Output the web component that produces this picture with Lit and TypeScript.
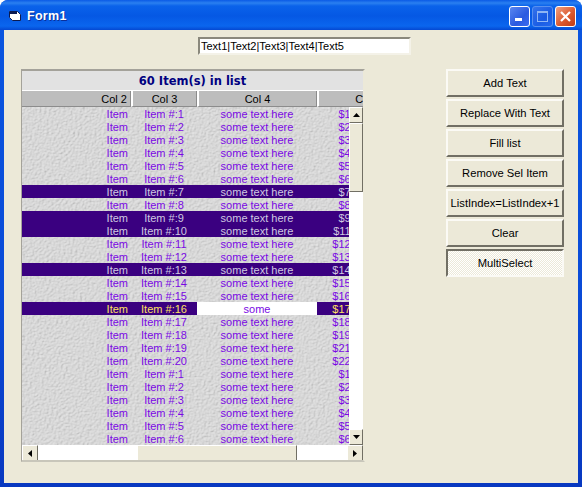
import { LitElement, css, html } from "lit";
import { customElement } from "lit/decorators.js";
import { classMap } from "lit/directives/class-map.js";

const BUTTONS = ["Add Text", "Replace With Text", "Fill list", "Remove Sel Item", "ListIndex=ListIndex+1", "Clear"];
const SELECTED = [7, 9, 10, 13];

function price(n: number) {
  if (n < 10) return n;
  return n < 19 ? n + 1 : n + 2;
}

// 20 items, then the list starts over
const ROWS = Array.from({ length: 26 }, (_, i) => {
  const row = i + 1;
  const num = row > 20 ? row - 20 : row;
  return { row, num, cost: row > 20 ? num : price(num) };
});

@customElement("app-root")
export class AppRoot extends LitElement {
  static styles = css`
    :host {
      display: block;
      width: 582px;
      height: 487px;
      overflow: hidden;
      background: #fff;
      font-family: "Liberation Sans", Arial, sans-serif;
      font-size: 11px;
    }
    .window {
      height: 487px;
      box-sizing: border-box;
      display: flex;
      flex-direction: column;
      padding: 0 4px 4px;
      border-radius: 8px 8px 0 0;
      background: linear-gradient(#0a56e0, #0a4bd8 60%, #0838c0);
    }
    .titlebar {
      height: 30px;
      flex: none;
      margin: 0 -4px;
      padding: 0 6px 0 9px;
      display: flex;
      align-items: center;
      border-radius: 8px 8px 0 0;
      background: linear-gradient(#0a5ae6 0, #2a80f0 3px, #0a62ea 6px, #0558e4 16px, #0a66ee 26px, #0448d2 30px);
      color: #fff;
      font-size: 12.5px;
      font-weight: bold;
      text-shadow: 1px 1px 0 #0a2f9a;
    }
    .titlebar .appicon { margin-right: 6px; flex: none; margin-top: 2px; }
    .titlebar .label { flex: 1; letter-spacing: 0.3px; margin-top: 2px; }
    .winbtns { display: flex; gap: 2px; margin-top: 3px; }
    .winbtn {
      width: 21px;
      height: 21px;
      box-sizing: border-box;
      border: 1px solid #fff;
      border-radius: 3px;
      background: linear-gradient(135deg, #5a86f0, #2a5ae0 60%, #3c6cf0);
      display: flex;
      align-items: center;
      justify-content: center;
    }
    .winbtn.off { opacity: 0.55; border-color: #9ab8f4; }
    .winbtn.close { background: linear-gradient(135deg, #f0a080, #dc5a30 55%, #c03c14); }

    .client {
      flex: 1;
      background: #ece9d8;
      padding: 7px 0 0 17px;
      display: flex;
      flex-direction: column;
    }
    .textbox {
      width: 213px;
      height: 18px;
      margin-left: 177px;
      margin-bottom: 14px;
      box-sizing: border-box;
      background: #fff;
      border: 2px solid;
      border-color: #8a887c #f4f2e8 #f4f2e8 #8a887c;
      padding-left: 1px;
      line-height: 15px;
      color: #000;
      white-space: nowrap;
      overflow: hidden;
    }
    .main { display: flex; align-items: flex-start; gap: 81px; }

    .list {
      width: 344px;
      height: 393px;
      box-sizing: border-box;
      border-style: solid;
      border-width: 2px 2px 2px 1px;
      border-color: #a4a29a #ece9d8 #c8c6ba #a4a29a;
      display: flex;
      flex-direction: column;
      overflow: hidden;
    }
    .caption {
      height: 20px;
      flex: none;
      box-sizing: border-box;
      background: #e2e2e2;
      border-bottom: 1px solid #fff;
      color: #000080;
      font-family: "DejaVu Sans", sans-serif;
      font-size: 11.5px;
      font-weight: bold;
      line-height: 21px;
      text-align: center;
    }
    .head, .row {
      display: grid;
      grid-template-columns: 109px 66px 120px 49px;
    }
    .head {
      height: 16px;
      flex: none;
      background: #bdbdbd;
      color: #000;
      line-height: 16px;
      width: 380px;
    }
    .head div {
      box-sizing: border-box;
      height: 16px;
      text-align: center;
      border-left: 2px solid #fff;
      border-right: 1px solid #8c8c8c;
      border-bottom: 1px solid #8c8c8c;
    }
    .head .c2 { text-align: right; padding-right: 3px; border-left: 0; }
    .head .c5 { width: 100px; border-right: 0; }

    .middle { display: flex; height: 338px; flex: none; }
    .rows {
      width: 327px;
      flex: none;
      overflow: hidden;
      color: #7a08e4;
      background-color: #d8d8d8;
      background-image: url("data:image/svg+xml,%3Csvg xmlns='http://www.w3.org/2000/svg' width='327' height='338'%3E%3Cfilter id='f' x='0' y='0' width='100%25' height='100%25'%3E%3CfeTurbulence type='fractalNoise' baseFrequency='.42 .6' numOctaves='2' seed='4'/%3E%3CfeDiffuseLighting surfaceScale='.9' diffuseConstant='1' lighting-color='%23e4e4e4'%3E%3CfeDistantLight azimuth='225' elevation='62'/%3E%3C/feDiffuseLighting%3E%3C/filter%3E%3Crect width='327' height='338' filter='url(%23f)'/%3E%3C/svg%3E");
    }
    .row { height: 13px; line-height: 14px; white-space: nowrap; width: 344px; }
    .row div { height: 13px; text-align: center; overflow: hidden; }
    .row .c2 { text-align: right; padding-right: 3px; }
    .row .c5 { text-align: right; }
    .row.sel { background: #3a0080; color: #cfc8e0; }
    .row.cur { background: #3a0080; color: #ffe060; }
    .row .edit { background: #fff; color: #7a08e4; }

    .vbar {
      width: 14px;
      flex: none;
      background: #fff;
      display: flex;
      flex-direction: column;
    }
    .hbar {
      height: 16px;
      flex: none;
      background: #fff;
      display: flex;
    }
    .sb {
      box-sizing: border-box;
      background: #ece9d8;
      border: 1px solid;
      border-color: #fff #716f64 #716f64 #fff;
      display: flex;
      align-items: center;
      justify-content: center;
      flex: none;
    }
    .vbar .sb.arrow { height: 16px; }
    .vbar .thumb { height: 69px; }
    .vbar .gap { flex: 1; }
    .hbar .sb.arrow { width: 16px; }
    .hbar .track1 { width: 99px; flex: none; }
    .hbar .thumb { width: 160px; }
    .hbar .gap { flex: 1; }

    .buttons { display: flex; flex-direction: column; gap: 2px; width: 118px; }
    .btn {
      height: 28px;
      box-sizing: border-box;
      background: #ece9d8;
      border: 2px solid;
      border-color: #fbfaf5 #716f64 #716f64 #fbfaf5;
      color: #000;
      display: flex;
      align-items: center;
      justify-content: center;
      font-size: 11.2px;
    }
    .btn.pressed {
      border-color: #716f64 #fbfaf5 #fbfaf5 #716f64;
      background: repeating-conic-gradient(#fff 0 25%, #ece9d8 0 50%) 0 0 / 2px 2px;
    }
  `;

  render() {
    return html`
      <div class="window">
        <div class="titlebar">
          <svg class="appicon" width="12" height="11" viewBox="0 0 12 11">
            <path d="M0.5 0.5h8l3 3v6h-8l-3-3z" fill="#fff" stroke="#0a1a50" />
            <path d="M1 1h7v2H1z" fill="#0a1a50" />
          </svg>
          <span class="label">Form1</span>
          <div class="winbtns">
            <div class="winbtn">
              <svg width="11" height="11"><rect x="1" y="7" width="7" height="3" fill="#fff" /></svg>
            </div>
            <div class="winbtn off">
              <svg width="13" height="13"><rect x="1.5" y="1.5" width="10" height="10" fill="none" stroke="#fff" /><rect x="1" y="1" width="11" height="2" fill="#fff" /></svg>
            </div>
            <div class="winbtn close">
              <svg width="13" height="13"><path d="M2 2l9 9M11 2l-9 9" stroke="#fff" stroke-width="2.2" /></svg>
            </div>
          </div>
        </div>
        <div class="client">
          <div class="textbox">Text1|Text2|Text3|Text4|Text5</div>
          <div class="main">
            <div class="list">
              <div class="caption">60 Item(s) in list</div>
              <div class="head">
                <div class="c2">Col 2</div>
                <div>Col 3</div>
                <div>Col 4</div>
                <div class="c5">Col 5</div>
              </div>
              <div class="middle">
                <div class="rows">${ROWS.map((r) => this.renderRow(r))}</div>
                <div class="vbar">
                  <div class="sb arrow"><svg width="7" height="4"><path d="M3.5 0L7 4H0z" /></svg></div>
                  <div class="sb thumb"></div>
                  <div class="gap"></div>
                  <div class="sb arrow"><svg width="7" height="4"><path d="M0 0h7L3.5 4z" /></svg></div>
                </div>
              </div>
              <div class="hbar">
                <div class="sb arrow"><svg width="4" height="7"><path d="M4 0v7L0 3.5z" /></svg></div>
                <div class="track1"></div>
                <div class="sb thumb"></div>
                <div class="gap"></div>
                <div class="sb arrow"><svg width="4" height="7"><path d="M0 0l4 3.5L0 7z" /></svg></div>
              </div>
            </div>
            <div class="buttons">
              ${BUTTONS.map((b) => html`<div class="btn">${b}</div>`)}
              <div class="btn pressed">MultiSelect</div>
            </div>
          </div>
        </div>
      </div>
    `;
  }

  renderRow(r: { row: number; num: number; cost: number }) {
    const cur = r.row === 16;
    const classes = { row: true, sel: SELECTED.includes(r.row), cur };
    return html`
      <div class=${classMap(classes)}>
        <div class="c2">Item</div>
        <div>Item #:${r.num}</div>
        ${cur ? html`<div class="edit">some</div>` : html`<div>some text here</div>`}
        <div class="c5">$${r.cost}.00</div>
      </div>
    `;
  }
}
